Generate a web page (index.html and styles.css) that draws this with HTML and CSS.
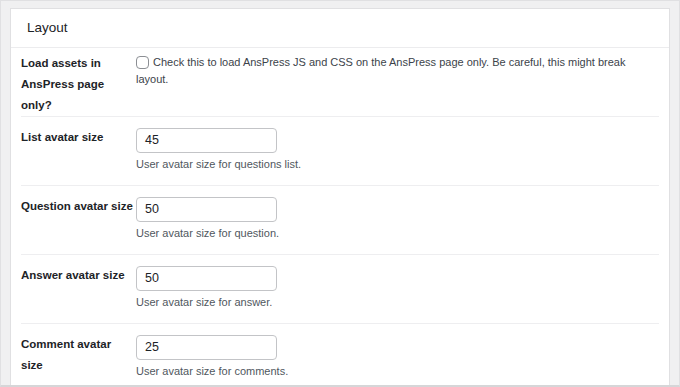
FILE: index.html
```html
<!DOCTYPE html>
<html>
<head>
<meta charset="utf-8">
<link rel="stylesheet" href="styles.css">
</head>
<body>
<div class="frame">
  <div class="card">
    <div class="card-head">Layout</div>
    <div class="rows">
      <div class="row row-first">
        <div class="label">Load assets in AnsPress page only?</div>
        <div class="field">
          <label class="check"><span class="box"></span>Check this to load AnsPress JS and CSS on the AnsPress page only. Be careful, this might break layout.</label>
        </div>
      </div>
      <div class="row">
        <div class="label">List avatar size</div>
        <div class="field">
          <div class="input">45</div>
          <div class="desc">User avatar size for questions list.</div>
        </div>
      </div>
      <div class="row">
        <div class="label">Question avatar size</div>
        <div class="field">
          <div class="input">50</div>
          <div class="desc">User avatar size for question.</div>
        </div>
      </div>
      <div class="row">
        <div class="label">Answer avatar size</div>
        <div class="field">
          <div class="input">50</div>
          <div class="desc">User avatar size for answer.</div>
        </div>
      </div>
      <div class="row">
        <div class="label">Comment avatar size</div>
        <div class="field">
          <div class="input">25</div>
          <div class="desc">User avatar size for comments.</div>
        </div>
      </div>
    </div>
  </div>
</div>
</body>
</html>
```
FILE: styles.css
```css
html, body {
  margin: 0;
  padding: 0;
}
body {
  font-family: "Liberation Sans", Arial, sans-serif;
  color: #1d2327;
  background: #fff;
}
.frame {
  width: 680px;
  height: 387px;
  box-sizing: border-box;
  border: 1px solid #e0e0e2;
  border-bottom: 2px solid #d6d6d8;
  background: #f0f0f1;
  padding: 7px 9px 0 9px;
  overflow: hidden;
}
.card {
  background: #fff;
  border: 1px solid #e0e0e2;
  border-bottom: none;
  min-height: 100%;
}
.card-head {
  height: 38px;
  line-height: 38px;
  padding-left: 16px;
  font-size: 13.5px;
  border-bottom: 1px solid #ececee;
}
.rows {
  padding: 0 10px;
}
.row {
  display: flex;
  border-bottom: 1px solid #eeeef0;
  padding: 10px 0 12px;
}
.row-first {
  padding: 5px 0 0;
}
.row:last-child {
  border-bottom: none;
}
.label {
  width: 115px;
  flex: none;
  font-size: 11.5px;
  font-weight: 700;
  line-height: 21px;
  padding-top: 0;
}
.field {
  flex: 1;
  font-size: 11px;
}
.check {
  display: block;
  line-height: 17px;
  padding-top: 1px;
  color: #3c434a;
}
.box {
  display: inline-block;
  width: 11px;
  height: 11px;
  border: 1px solid #8c8f94;
  border-radius: 4px;
  vertical-align: -3px;
  margin-right: 4px;
  background: #fff;
}
.input {
  width: 141px;
  height: 25px;
  box-sizing: border-box;
  border: 1px solid #c3c4c7;
  border-radius: 4px;
  padding-left: 8px;
  line-height: 23px;
  font-size: 12.5px;
  margin-top: 1px;
}
.desc {
  color: #50575e;
  margin-top: 3px;
  line-height: 17px;
}
```
